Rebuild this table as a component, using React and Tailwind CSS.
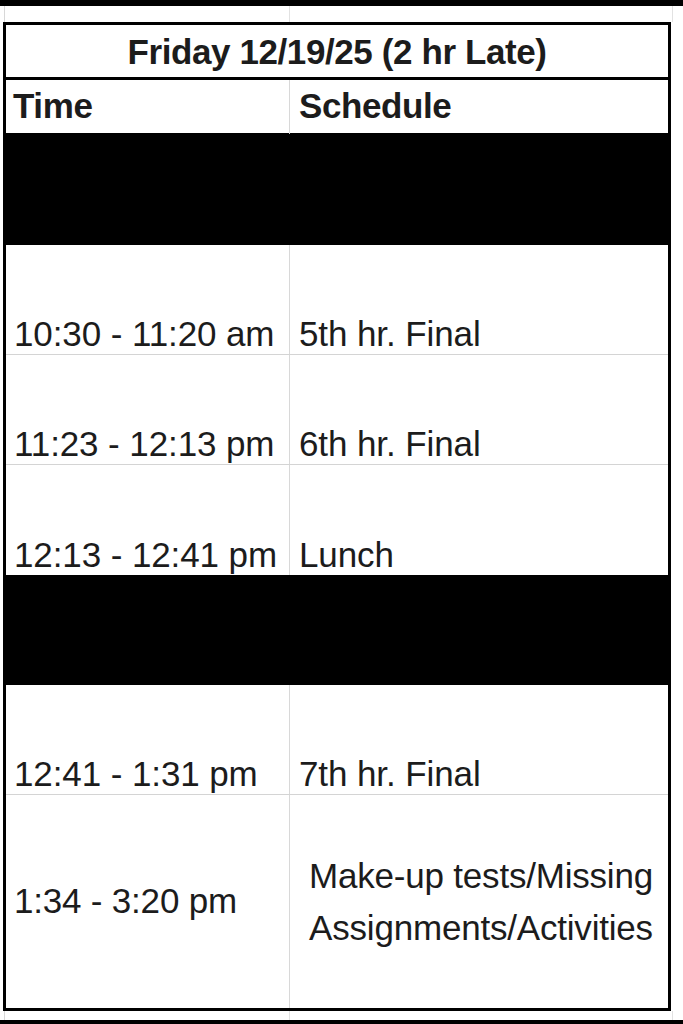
import React from "react"

const rows = [
  { type: "black" },
  { time: "10:30 - 11:20 am", label: "5th hr. Final" },
  { time: "11:23 - 12:13 pm", label: "6th hr. Final" },
  { time: "12:13 - 12:41 pm", label: "Lunch", last: true },
  { type: "black" },
  { time: "12:41 - 1:31 pm", label: "7th hr. Final" },
]

const font = { fontFamily: "'Liberation Sans', Arial, sans-serif" }

const App = () => {
  return (
    <div className="h-[1024px] w-[683px] overflow-hidden bg-white text-[#1c1c1c]" style={font}>
      <div className="h-[6px] bg-black" />
      <div className="flex h-[16px]">
        <div className="w-[5px] border-r border-[#d8d8d8]" />
        <div className="w-[285px] border-r border-[#e2e2e2]" />
        <div className="w-[383px] border-r border-[#e2e2e2]" />
      </div>

      <div className="ml-[3px] w-[668px] border-[3px] border-black">
        <div className="flex h-[55px] items-center justify-center border-b-[3px] border-black pt-[3px] text-[35px] font-bold tracking-[-0.4px]">
          Friday 12/19/25 (2 hr Late)
        </div>
        <div className="grid h-[55px] grid-cols-[284px_1fr] border-b-2 border-black text-[35px] font-bold tracking-[-0.4px]">
          <div className="flex items-end border-r border-[#d8d8d8] pb-[1px] pl-[7px]">Time</div>
          <div className="flex items-end pb-[1px] pl-[9px]">Schedule</div>
        </div>

        {rows.map((row, i) =>
          row.type === "black" ? (
            <div key={i} className="h-[110px] bg-black" />
          ) : (
            <div
              key={i}
              className={`grid h-[110px] grid-cols-[284px_1fr] text-[35px] leading-[34px] tracking-[-0.1px] ${
                row.last ? "" : "border-b border-[#d4d4d4]"
              }`}
            >
              <div className="flex items-end border-r border-[#d8d8d8] pb-[3px] pl-[8px]">{row.time}</div>
              <div className="flex items-end pb-[3px] pl-[9px]">{row.label}</div>
            </div>
          ),
        )}

        <div className="grid h-[213px] grid-cols-[284px_1fr] text-[35px] tracking-[-0.2px]">
          <div className="flex items-center border-r border-[#d8d8d8] pl-[8px]">1:34 - 3:20 pm</div>
          <div className="flex flex-col items-center justify-center pl-[4px] leading-[52px]">
            <span>Make-up tests/Missing</span>
            <span>Assignments/Activities</span>
          </div>
        </div>
      </div>

      <div className="flex h-[9px]">
        <div className="w-[5px] border-r border-[#d8d8d8]" />
        <div className="w-[285px] border-r border-[#e2e2e2]" />
        <div className="w-[383px] border-r border-[#e2e2e2]" />
      </div>
      <div className="h-[10px] bg-black" />
    </div>
  )
}

export default App
